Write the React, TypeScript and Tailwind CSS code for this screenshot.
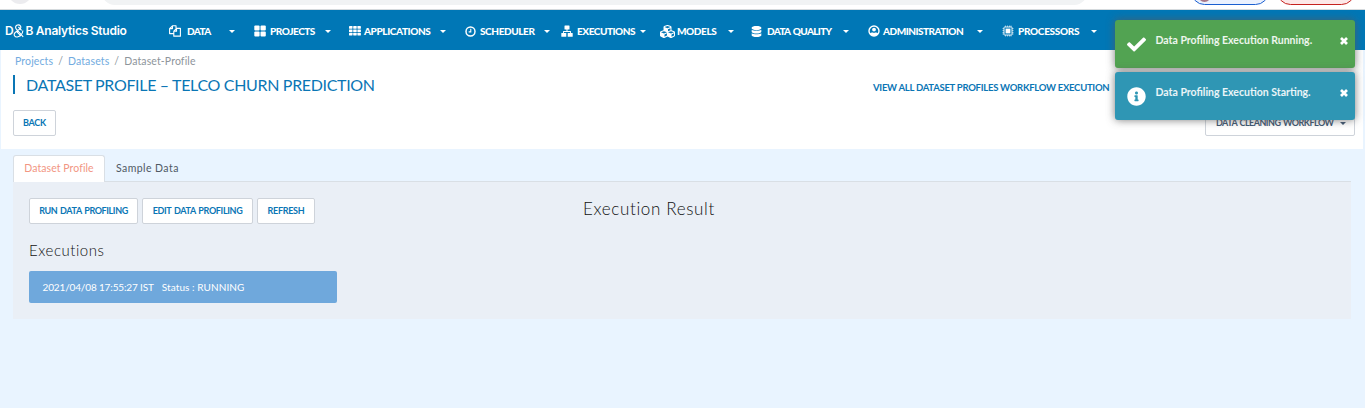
import React from "react";
import { FaCubes, FaDatabase, FaCheck, FaInfoCircle } from "react-icons/fa";

const Caret = () => (
  <svg viewBox="0 0 6 3" className="h-[3px] w-[6px] shrink-0" fill="currentColor">
    <path d="M0 0h6L3 3z" />
  </svg>
);

const Files = () => (
  <svg viewBox="0 0 14 14" className="size-[12px]" fill="none" stroke="currentColor" strokeWidth="1.300" strokeLinejoin="round">
    <path d="M5.500 10H.7V4.200L4 .9h4.200v3M4 .9v3.300H.7M13.300 13H5.600V7.200L8.800 3.900h4.500zM8.800 3.900v3.300H5.600" />
  </svg>
);

const Tiles = () => (
  <svg viewBox="0 0 12 12" className="size-[12px]" fill="currentColor">
    <rect x="0.300" y="0.500" width="5.300" height="5" rx="1" />
    <rect x="6.500" y="0.500" width="5.300" height="5" rx="1" />
    <rect x="0.300" y="6.500" width="5.300" height="5" rx="1" />
    <rect x="6.500" y="6.500" width="5.300" height="5" rx="1" />
  </svg>
);

const Grid9 = () => (
  <svg viewBox="0 0 12 10" className="h-[10px] w-[12px]" fill="currentColor">
    {[0, 4.2, 8.4].map((x) => [0, 3.4, 6.8].map((y) => <rect key={x + "-" + y} x={x} y={y} width="3.500" height="2.700" rx="0.400" />))}
  </svg>
);

const Clock = () => (
  <svg viewBox="0 0 12 12" className="size-[11px]" fill="none" stroke="currentColor">
    <circle cx="6" cy="6" r="4.900" strokeWidth="1.600" />
    <path d="M6.300 3v3.400H4" strokeWidth="1.200" />
  </svg>
);

const Tree = () => (
  <svg viewBox="0 0 12 12" className="-mt-[1px] size-[12px]" fill="currentColor">
    <rect x="3.500" y="0.500" width="5" height="4" rx="0.500" />
    <rect x="0.300" y="8" width="5" height="3.700" rx="0.500" />
    <rect x="6.700" y="8" width="5" height="3.700" rx="0.500" />
    <path d="M5.500 4h1v2h3.400v2.200H9V7H3v1.200h-.9V6h3.400z" />
  </svg>
);

const User = () => (
  <svg viewBox="0 0 12 12" className="-mt-[1px] size-[12px]">
    <circle cx="6" cy="6" r="5" fill="none" stroke="currentColor" strokeWidth="1.400" />
    <circle cx="6" cy="4.600" r="1.900" fill="currentColor" />
    <path d="M1.700 8.200c1.500-.9 2.500-1 4.300-.3 1.800-.7 2.800-.6 4.300.3A5 5 0 0 1 6 11a5 5 0 0 1-4.300-2.800z" fill="currentColor" />
  </svg>
);

const Chip = () => (
  <svg viewBox="0 0 12 12" className="size-[12px]" stroke="currentColor">
    <path d="M3.500 .5v11M5.500 .5v11M7.500 .5v11M.5 3.500h11M.5 5.500h11M.5 7.500h11M9 .5v11M.5 9h11" strokeWidth="0.700" opacity="0.800" />
    <rect x="2" y="2" width="8" height="8" rx="0.600" fill="#0077b6" strokeWidth="0.900" />
    <rect x="4" y="4" width="4" height="4" fill="currentColor" strokeWidth="0.800" />
  </svg>
);

const Cross = () => (
  <svg viewBox="0 0 8 8" className="mt-[17px] size-[8px]" stroke="currentColor" strokeWidth="2.700">
    <path d="M1 1l6 6M7 1L1 7" />
  </svg>
);

const nav = [
  { label: "DATA", icon: <Files />, box: "w-[85px]", text: "w-[42px]", track: "tracking-[-0.6px]", gap: "w-[18px]" },
  { label: "PROJECTS", icon: <Tiles />, box: "w-[95px]", text: "w-[55px]", track: "tracking-[-0.45px]", gap: "w-[16px]" },
  { label: "APPLICATIONS", icon: <Grid9 />, box: "w-[116px]", text: "w-[76px]", track: "tracking-[-0.4px]", gap: "w-[15px]" },
  { label: "SCHEDULER", icon: <Clock />, box: "w-[96px]", text: "w-[64px]", track: "tracking-[-0.4px]", gap: "w-[15px]" },
  { label: "EXECUTIONS", icon: <Tree />, box: "w-[99px]", text: "w-[63px]", track: "tracking-[-0.45px]", gap: "w-[16px]" },
  { label: "MODELS", icon: <FaCubes className="size-[15px]" />, box: "w-[91px]", text: "w-[51px]", track: "tracking-[-0.4px]", gap: "w-[17px]" },
  { label: "DATA QUALITY", icon: <FaDatabase className="size-[11px]" />, box: "w-[117px]", text: "w-[76px]", track: "tracking-[-0.65px] [word-spacing:1px]", gap: "w-[16px]" },
  { label: "ADMINISTRATION", icon: <User />, box: "w-[134px]", text: "w-[94px]", track: "tracking-[-0.5px]", gap: "w-[15px]" },
  { label: "PROCESSORS", icon: <Chip />, box: "w-[100px]", text: "w-[73px]", track: "tracking-[-0.3px]", gap: "w-[16px]" },
];

const Button = ({ children, className }: { children: React.ReactNode; className: string }) => (
  <button className={"flex h-[26px] shrink-0 items-center justify-center whitespace-nowrap rounded-[2px] border border-[#ced3da] bg-white text-[9px] font-bold text-[#0a76b5] " + className}>
    {children}
  </button>
);

const Toast = ({ text, icon, color }: { text: string; icon: React.ReactNode; color: string }) => (
  <div className={"flex h-12 rounded-[3px] pl-3 text-white shadow-[0_0_8px_rgba(90,90,90,0.8)] " + color}>
    <div className="flex w-7 items-center">{icon}</div>
    <div className="w-[185px] whitespace-nowrap pl-[0.5px] pt-[13px] text-[10.5px] font-bold leading-[15px] text-white/90">{text}</div>
    <Cross />
  </div>
);

export default function App() {
  return (
    <div className="relative h-[408px] w-[1365px] overflow-hidden bg-[#e9f4ff] font-[Lato,sans-serif]">
      <div className="flex h-[10px] items-start overflow-hidden border-b border-[#d5dadd] bg-white">
        <div className="-mt-[20px] ml-2 h-6 w-6 shrink-0 rounded-full bg-[#ececef]" />
        <div className="-mt-[20px] ml-[70px] h-[25px] w-[985px] shrink-0 rounded-full bg-[#f1f3f4]" />
        <div className="-mt-[22px] ml-[104px] flex h-[27px] w-[78px] shrink-0 items-end rounded-full border border-[#1a5fd0] bg-[#eaf1fe] pl-[6px] pb-[2px]">
          <div className="h-[14px] w-[13px] rounded-full bg-[#a87888]" />
        </div>
        <div className="-mt-[22px] ml-[8px] h-[27px] w-[78px] shrink-0 rounded-full border border-[#c5221f] bg-[#fce8e8]" />
      </div>

      <header className="flex h-10 items-center bg-[#0077b6] text-white">
        <div className="flex w-[169px] items-center pl-[5px] pt-[1px] font-[Inter,sans-serif] text-[12px] font-semibold tracking-[-0.25px]">
          <span>D</span>
          <svg viewBox="0 0 11 14" className="h-[14px] w-[11px]" fill="none" stroke="currentColor" strokeWidth="1.100">
            <path d="M10.200 12.800 3.200 4.800C1.800 2.900 3.200.9 5.200.9s3.500 2 2 3.800L2.200 8.500C0 10.700 1.800 13.200 4.300 13c2.800-.3 5.400-3 5.600-6.500" />
            <path d="M8 12 3.500 7.300M8.600 6.300 5.400 3" />
          </svg>
          <span className="ml-[1px] whitespace-nowrap">B Analytics Studio</span>
        </div>
        <nav className="flex items-center pt-[2px]">
          {nav.map((n) => (
            <div key={n.label} className={"flex shrink-0 items-center " + n.box}>
              <div className={"flex shrink-0 items-center " + n.gap}>{n.icon}</div>
              <div className={"shrink-0 whitespace-nowrap text-[10px] font-black leading-4 " + n.text + " " + n.track}>{n.label}</div>
              <Caret />
            </div>
          ))}
        </nav>
      </header>

      <section className="ml-px h-[99px] w-[1362px] bg-white pl-3 pr-[8px]">
        <div className="flex h-[22px] items-center gap-[5px] pl-[2px] pt-px text-[10.5px] tracking-[0.12px] text-[#8e959b]">
          <span className="text-[#72abe0]">Projects</span>
          <span>/</span>
          <span className="text-[#72abe0]">Datasets</span>
          <span>/</span>
          <span>Dataset-Profile</span>
        </div>
        <div className="flex h-[23px] items-start pt-[3px]">
          <h1 className="h-[19px] w-[860px] whitespace-nowrap border-l-2 border-[#0a76b5] pl-[11px] text-[16px] leading-[19px] tracking-[-0.33px] text-[#0a76b5]">
            DATASET PROFILE – TELCO CHURN PREDICTION
          </h1>
          <a className="whitespace-nowrap pt-[5px] text-[9.5px] font-bold leading-4 tracking-[-0.26px] text-[#0a76b5]">VIEW ALL DATASET PROFILES WORKFLOW EXECUTION</a>
        </div>
        <div className="flex justify-between pt-[15px]">
          <Button className="w-[43px] tracking-[-0.2px]">BACK</Button>
          <button className="flex h-[26px] w-[150px] items-center gap-[7px] whitespace-nowrap rounded-[2px] border border-[#ced3da] pl-[10px] text-[9px] font-bold tracking-[-0.53px] text-[#3d5570] [word-spacing:1px]">
            DATA CLEANING WORKFLOW
            <Caret />
          </button>
        </div>
      </section>

      <main className="ml-[13px] w-[1338px]">
        <div className="flex h-[33px] items-end border-b border-[#d9dfe5]">
          <div className="-mb-px flex h-[27px] w-[92px] items-center justify-center rounded-t-[3px] border border-b-0 border-[#d9dfe5] bg-white text-[10.5px] tracking-[0.07px] text-[#f29683]">Dataset Profile</div>
          <div className="flex h-[25px] items-center pl-[11px] text-[10.5px] tracking-[0.43px] text-[#4f5964]">Sample Data</div>
        </div>
        <div className="flex h-[137px] bg-[#eaeff6] pl-4 pt-4">
          <div className="w-[554px]">
            <div className="flex gap-1">
              <Button className="w-[109px] tracking-[-0.4px] [word-spacing:1px]">RUN DATA PROFILING</Button>
              <Button className="w-[111px] tracking-[-0.35px] [word-spacing:1px]">EDIT DATA PROFILING</Button>
              <Button className="w-[58px] tracking-[-0.3px]">REFRESH</Button>
            </div>
            <h2 className="pt-[16px] text-[15px] font-light leading-5 tracking-[0.55px] text-[#111]">Executions</h2>
            <div className="mt-[11px] flex h-8 w-[308px] items-center gap-2 rounded-[2px] bg-[#6fa8dc] pl-[13.5px] text-[10px] text-white">
              <span className="tracking-[-0.14px]">2021/04/08 17:55:27 IST</span>
              <span className="tracking-[0.08px]">Status : RUNNING</span>
            </div>
          </div>
          <h2 className="text-[17px] font-light leading-[22px] tracking-[0.65px] text-[#111]">Execution Result</h2>
        </div>
      </main>

      <div className="absolute left-[1115px] top-[20px] flex w-[240px] flex-col gap-1">
        <Toast text="Data Profiling Execution Running." color="bg-[#52a352]" icon={<FaCheck className="size-[19px]" />} />
        <Toast text="Data Profiling Execution Starting." color="bg-[#2f96b4]" icon={<FaInfoCircle className="size-[19px]" />} />
      </div>
    </div>
  );
}
